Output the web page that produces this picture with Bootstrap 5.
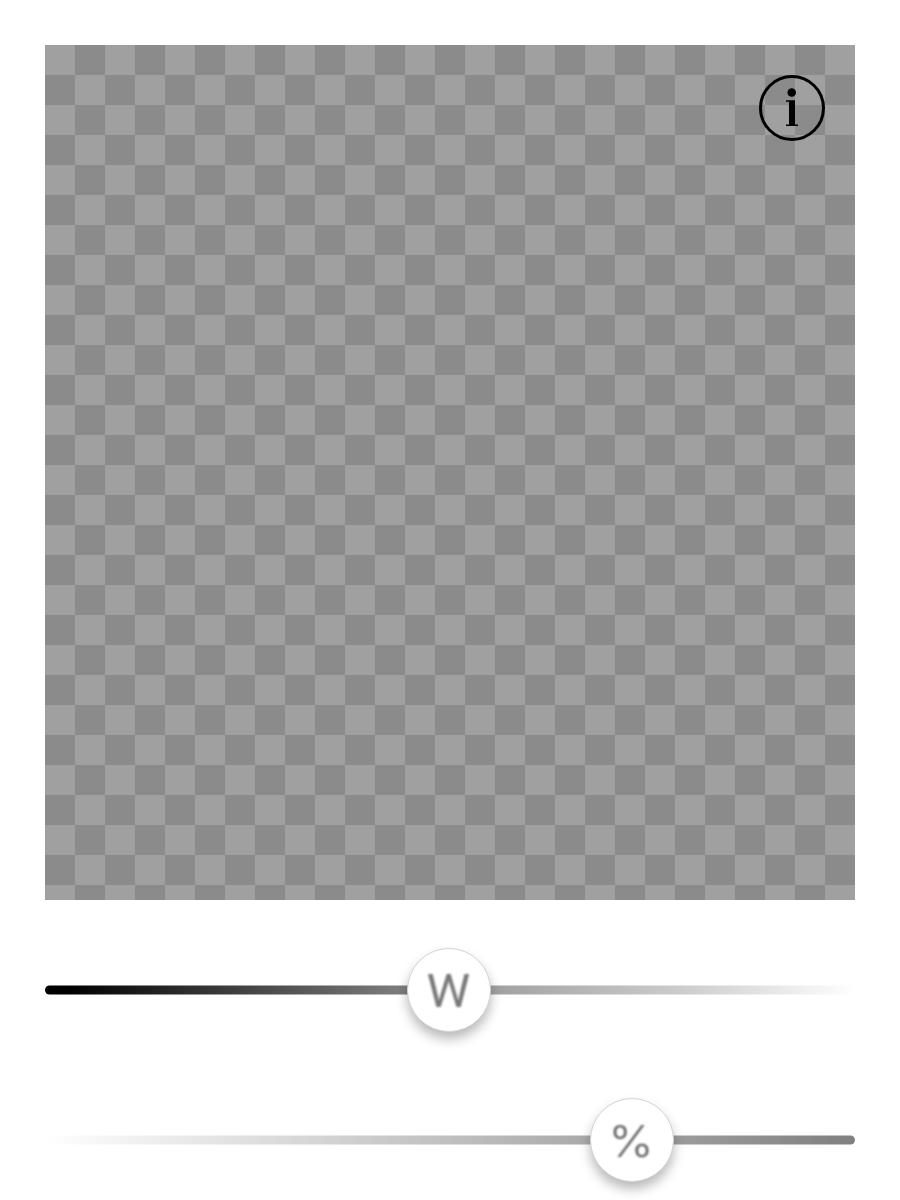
<!DOCTYPE html>
<html lang="en">
<head>
<meta charset="utf-8">
<meta name="viewport" content="width=device-width, initial-scale=1">
<title>Opacity and width</title>
<link href="https://cdn.jsdelivr.net/npm/bootstrap@5.3.0/dist/css/bootstrap.min.css" rel="stylesheet">
<style>
body { background: #fff; font-family: Roboto, sans-serif; }
.editor { height: 1200px; padding: 45px 45px 0; }
.canvas-area { height: 855px; padding: 30px; background: repeating-conic-gradient(#8b8b8b 0 25%, #a0a0a0 0 50%) 0 0 / 60px 60px; }
.info-btn { width: 66px; height: 66px; }
.slider { height: 150px; }
.knob { top: 50%; width: 84px; height: 84px; background: #fff; border: 1px solid #d4d4d4; box-shadow: 0 7px 12px rgba(0,0,0,.28); }
.knob span { font-size: 46px; line-height: 1; color: #777; filter: blur(.9px); transform: translateY(1px) scaleX(1.07); }
.knob .percent { font: 300 43px/1 Inter, sans-serif; color: #606060; transform: translateY(1px) scaleX(1.12); filter: blur(.8px); }
.sliders { padding-top: 15px; }
</style>
</head>
<body>
<main class="editor overflow-hidden">
  <section class="canvas-area d-flex justify-content-end align-items-start">
    <button class="info-btn btn p-0 border-0 d-block" aria-label="Information">
      <svg class="d-block" width="66" height="66" viewBox="0 0 66 66">
        <circle cx="33" cy="33" r="31.5" fill="none" stroke="#000" stroke-width="3"/>
        <circle cx="32.7" cy="17.5" r="4.3"/>
        <path d="M27 25.2H36V49.4H39V51H27V49.4H30V26.8H27Z"/>
      </svg>
    </button>
  </section>
  <section class="sliders">
    <div class="slider position-relative d-flex align-items-center">
      <svg class="d-block w-100" height="10">
        <defs><linearGradient id="widthFade"><stop offset=".03" stop-color="#000"/><stop offset=".25" stop-color="#444"/><stop offset=".45" stop-color="#808080"/><stop offset=".55" stop-color="#a0a0a0"/><stop offset=".8" stop-color="#cfcfcf"/><stop offset=".913" stop-color="#eaeaea"/><stop offset="1" stop-color="#fff"/></linearGradient></defs>
        <rect y=".5" width="810" height="9" rx="4.5" fill="url(#widthFade)"/>
      </svg>
      <div class="knob rounded-circle position-absolute translate-middle d-flex align-items-center justify-content-center" style="left:49.85%"><span>W</span></div>
    </div>
    <div class="slider position-relative d-flex align-items-center">
      <svg class="d-block w-100" height="10">
        <defs><linearGradient id="alphaFade"><stop stop-color="#fff"/><stop offset="1" stop-color="#808080"/></linearGradient></defs>
        <rect y=".5" width="810" height="9" rx="4.5" fill="url(#alphaFade)"/>
      </svg>
      <div class="knob rounded-circle position-absolute translate-middle d-flex align-items-center justify-content-center" style="left:72.42%"><span class="percent">%</span></div>
    </div>
  </section>
</main>
<script src="https://cdn.jsdelivr.net/npm/bootstrap@5.3.0/dist/js/bootstrap.bundle.min.js"></script>
</body>
</html>
